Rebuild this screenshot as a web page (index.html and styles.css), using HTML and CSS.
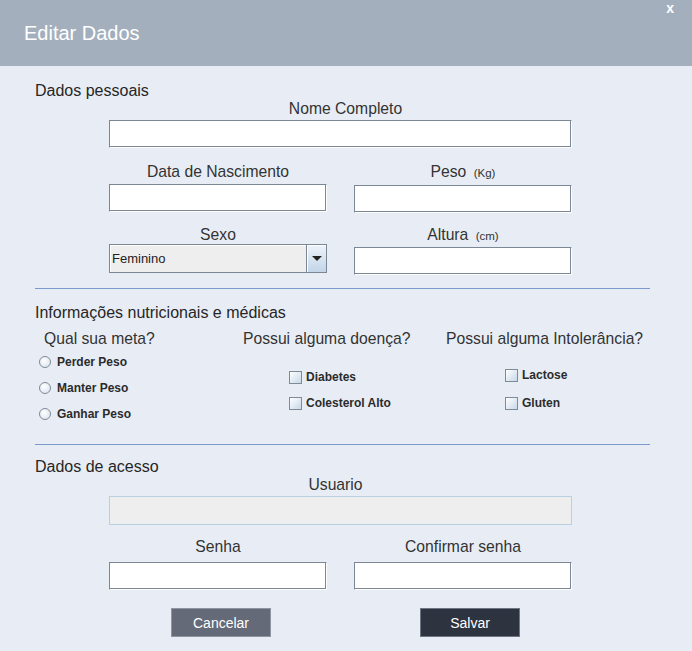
FILE: index.html
```html
<!DOCTYPE html>
<html lang="pt">
<head>
<meta charset="utf-8">
<title>Editar Dados</title>
<link rel="stylesheet" href="styles.css">
</head>
<body>
<div class="page">
  <header class="header">
    <h1 class="title">Editar Dados</h1>
    <span class="close">x</span>
  </header>
  <main class="content">
    <div class="sec-title">Dados pessoais</div>
    <div class="form">
      <div class="cell">
        <label class="lbl lbl-name">Nome Completo</label>
        <input class="field f-name" type="text">
      </div>
      <div class="row row2">
        <div class="cell">
          <label class="lbl">Data de Nascimento</label>
          <input class="field f-r2" type="text">
        </div>
        <div class="cell">
          <label class="lbl">Peso <small class="unit">(Kg)</small></label>
          <input class="field f-r2" type="text">
        </div>
      </div>
      <div class="row row3">
        <div class="cell">
          <label class="lbl">Sexo</label>
          <div class="combo">
            <span class="combo-text">Feminino</span>
            <span class="combo-btn"><span class="arrow"></span></span>
          </div>
        </div>
        <div class="cell">
          <label class="lbl">Altura <small class="unit">(cm)</small></label>
          <input class="field f-r3" type="text">
        </div>
      </div>
    </div>
    <div class="sep sep1"></div>

    <div class="sec-title t2">Informações nutricionais e médicas</div>
    <div class="cols">
      <div class="col">
        <div class="col-title">Qual sua meta?</div>
        <ul class="opts opts-radio">
          <li class="opt"><span class="radio"></span>Perder Peso</li>
          <li class="opt"><span class="radio"></span>Manter Peso</li>
          <li class="opt"><span class="radio"></span>Ganhar Peso</li>
        </ul>
      </div>
      <div class="col">
        <div class="col-title">Possui alguma doença?</div>
        <ul class="opts opts-c2">
          <li class="opt"><span class="check"></span>Diabetes</li>
          <li class="opt"><span class="check"></span>Colesterol Alto</li>
        </ul>
      </div>
      <div class="col">
        <div class="col-title">Possui alguma Intolerância?</div>
        <ul class="opts opts-c3">
          <li class="opt tall"><span class="check"></span>Lactose</li>
          <li class="opt tall"><span class="check"></span>Gluten</li>
        </ul>
      </div>
    </div>
    <div class="sep sep2"></div>

    <div class="sec-title t3">Dados de acesso</div>
    <div class="form">
      <div class="cell">
        <label class="lbl lbl-user">Usuario</label>
        <input class="field disabled" type="text" disabled>
      </div>
      <div class="row row4">
        <div class="cell">
          <label class="lbl">Senha</label>
          <input class="field f-r4" type="password">
        </div>
        <div class="cell">
          <label class="lbl">Confirmar senha</label>
          <input class="field f-r4" type="password">
        </div>
      </div>
    </div>
    <div class="actions">
      <button class="btn btn-cancel" type="button">Cancelar</button>
      <button class="btn btn-save" type="button">Salvar</button>
    </div>
  </main>
</div>
</body>
</html>
```
FILE: styles.css
```css
* { box-sizing: border-box; }
html, body { margin: 0; padding: 0; }
body {
  background: #e8edf5;
  font-family: "Liberation Sans", Arial, sans-serif;
  color: #2b2b2b;
}
.page { width: 692px; height: 651px; background: #e8edf5; }

.header {
  height: 66px;
  background: #a4afbd;
  display: flex;
  align-items: center;
  padding-left: 24px;
}
.title {
  margin: 0;
  font-size: 20px;
  font-weight: normal;
  line-height: 22px;
  color: #ffffff;
  flex: 1;
}
.close {
  align-self: flex-start;
  margin-top: 1px;
  margin-right: 18px;
  color: #ffffff;
  font-weight: bold;
  font-size: 14px;
  line-height: 14px;
}

.content { padding: 16px 0 0 35px; }

.sec-title { font-size: 16px; line-height: 18px; color: #262626; }
.t2 { margin-top: 15px; }
.t3 { margin-top: 13px; }

.form { margin-left: 74px; width: 463px; }
.cell { display: flex; flex-direction: column; }
.lbl {
  display: block;
  text-align: center;
  font-size: 15.7px;
  line-height: 18px;
  color: #333333;
}
.unit { font-size: 11.5px; margin-left: 3px; }
.lbl-name { padding-left: 10px; }
.lbl-user { padding-right: 10px; }

.row { display: grid; grid-template-columns: 218px 218px; column-gap: 27px; }
.row2 { margin-top: 15px; }
.row3 { margin-top: 13px; }
.row4 { margin-top: 13px; }

.field {
  display: block;
  width: 100%;
  height: 28px;
  margin: 2px 0 0 0;
  padding: 0 4px;
  background: #ffffff;
  border: 1px solid #7b8795;
  border-right-color: #ffffff;
  border-bottom-color: #ffffff;
  box-shadow: inset -1px -1px 0 #7b8795;
  font-family: "Liberation Sans", Arial, sans-serif;
  font-size: 13px;
  outline: none;
}
.f-r2 { margin-top: 3px; }
.f-r3 { margin-top: 2px; }
.f-r4 { margin-top: 6px; }
.disabled {
  height: 29px;
  background: #eeeeee;
  border: 1px solid #b9cfe4;
  box-shadow: none;
}

.combo {
  display: flex;
  height: 29px;
  border: 1px solid #7b8795;
  background: #eeeeee;
  width: 218px;
}
.combo-text {
  flex: 1;
  font-size: 13px;
  line-height: 27px;
  padding-left: 2px;
  color: #222222;
  border-right: 1px solid #7b8795;
  box-shadow: inset 1px 1px 0 #ffffff;
}
.combo-btn {
  width: 19px;
  display: flex;
  align-items: center;
  justify-content: center;
  background: linear-gradient(#eef3f9, #c3d5e8);
  box-shadow: inset 1px 1px 0 #ffffff;
}
.arrow {
  width: 0; height: 0;
  border-left: 5px solid transparent;
  border-right: 5px solid transparent;
  border-top: 5px solid #222222;
}

.sep { width: 615px; height: 1px; background: #7b98cf; }
.sep1 { margin-top: 13px; }
.sep2 { margin-top: 16px; }

.cols {
  display: grid;
  grid-template-columns: 199px 203px auto;
  margin-top: 8px;
  margin-left: 9px;
  height: 98px;
}
.col-title { font-size: 15.7px; line-height: 18px; color: #333333; }
.opts { list-style: none; margin: 0; padding: 0; }
.opts-radio { margin-top: 1px; margin-left: -5px; }
.opts-c2 { margin-top: 16px; margin-left: 46px; }
.opts-c3 { margin-top: 13px; margin-left: 59px; }
.opt {
  display: flex;
  align-items: center;
  height: 26px;
  font-size: 12px;
  font-weight: bold;
  color: #2b2b2b;
}
.tall { height: 28px; }
.radio {
  width: 12px; height: 12px;
  border-radius: 50%;
  border: 1px solid #7f8a97;
  background: radial-gradient(circle at 40% 35%, #ffffff, #d5e0ec);
  margin-right: 6px;
}
.check {
  width: 13px; height: 13px;
  border: 1px solid #7f8a97;
  background: linear-gradient(135deg, #ffffff, #c8d7e8);
  margin-right: 4px;
}

.actions {
  display: flex;
  gap: 149px;
  margin-top: 18px;
  margin-left: 136px;
}
.btn {
  height: 29px;
  width: 100px;
  border: 1px solid #8f96a3;
  color: #ffffff;
  font-family: "Liberation Sans", Arial, sans-serif;
  font-size: 14px;
  padding: 0;
}
.btn-cancel { background: #646a78; }
.btn-save { background: #2e3340; border-color: #6f7582; }
```
